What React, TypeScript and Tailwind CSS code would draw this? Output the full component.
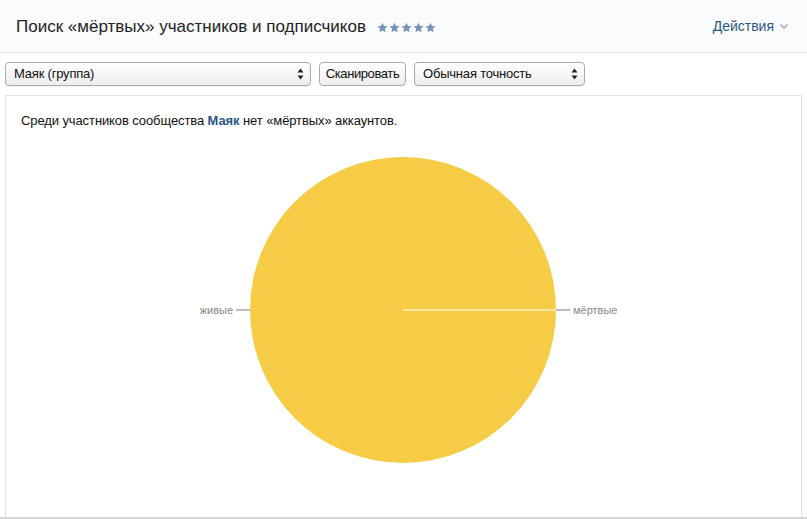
import React from 'react';

/* ── Small drawings ──────────────────────── */
function Stars() {
  return (
    <div className="flex gap-[1px] ml-[11px] mt-[1px]">
      {[0, 1, 2, 3, 4].map((i) => (
        <svg key={i} width="11" height="11" viewBox="0 0 24 24">
          <path d="M12 1.5l3.1 7.2 7.8.7-5.9 5.2 1.8 7.7L12 18.3l-6.8 4 1.8-7.7L1.1 9.4l7.8-.7z" fill="#7693b8" />
        </svg>
      ))}
    </div>
  );
}

function UpDown() {
  return (
    <svg width="7" height="12" viewBox="0 0 7 12">
      <path d="M3.5 0.5 L6.5 4.5 H0.5 Z" fill="#222" />
      <path d="M3.5 11.5 L6.5 7.5 H0.5 Z" fill="#222" />
    </svg>
  );
}

function SelectBox({ label, width }: { label: string; width: string }) {
  return (
    <div
      className={`${width} h-[24px] flex items-center justify-between pl-[8px] pr-[6px] rounded-[4px] border border-[#aaaaaa] bg-gradient-to-b from-white to-[#ededed] shadow-[0_1px_0_rgba(0,0,0,0.04)]`}
    >
      <span className="text-[13px] tracking-[-0.2px] text-[#111]">{label}</span>
      <UpDown />
    </div>
  );
}

function Pie() {
  const cx = 397;
  const cy = 180;
  const r = 153;
  return (
    <svg width="794" height="380" viewBox="0 0 794 380" className="block">
      <circle cx={cx} cy={cy} r={r} fill="#f6cc46" />
      <line x1={cx} y1={cy} x2={cx + r} y2={cy} stroke="#ffffff" strokeWidth="1.2" />
      <line x1={cx - r - 14} y1={cy} x2={cx - r} y2={cy} stroke="#777" strokeWidth="1" />
      <line x1={cx + r} y1={cy} x2={cx + r + 14} y2={cy} stroke="#777" strokeWidth="1" />
      <text x={cx - r - 17} y={cy + 4} textAnchor="end" fontSize="11" fill="#888" fontFamily="Liberation Sans, Arial, sans-serif">
        живые
      </text>
      <text x={cx + r + 17} y={cy + 4} textAnchor="start" fontSize="11" fill="#888" fontFamily="Liberation Sans, Arial, sans-serif">
        мёртвые
      </text>
    </svg>
  );
}

export default function App() {
  return (
    <div className="w-[807px] h-[519px] bg-white overflow-hidden font-['Liberation_Sans',Arial,sans-serif]">
      {/* Header */}
      <div className="h-[53px] bg-[#fafbfc] border-b border-[#e7e8ec] flex items-center justify-between pl-[16px] pr-[19px]">
        <div className="flex items-center pt-[1px]">
          <span className="text-[17px] text-[#222]">Поиск «мёртвых» участников и подписчиков</span>
          <Stars />
        </div>
        <div className="flex items-center gap-[6px] text-[#2a5885] pt-[1px]">
          <span className="text-[14px]">Действия</span>
          <svg width="8" height="5" viewBox="0 0 8 5">
            <path d="M0.5 0.5 L4 4 L7.5 0.5" fill="none" stroke="#8b9bb0" strokeWidth="1.1" />
          </svg>
        </div>
      </div>

      {/* Toolbar */}
      <div className="flex items-center gap-[8px] pl-[5px] pt-[9px] pb-[9px]">
        <SelectBox label="Маяк (группа)" width="w-[306px]" />
        <div className="h-[24px] w-[87px] flex items-center justify-center rounded-[4px] border border-[#aaaaaa] bg-gradient-to-b from-white to-[#ededed] text-[13px] tracking-[-0.4px] text-[#111]">
          Сканировать
        </div>
        <SelectBox label="Обычная точность" width="w-[171px]" />
      </div>

      {/* Result panel */}
      <div className="mx-[5px] h-[422px] border border-[#dfe2e6] border-b-0">
        <p className="pl-[15px] pt-[17px] text-[13px] tracking-[-0.1px] text-[#111] leading-[16px]">
          Среди участников сообщества <span className="font-bold text-[#2a5885]">Маяк</span> нет «мёртвых» аккаунтов.
        </p>
        <div className="pt-[1px]">
          <Pie />
        </div>
      </div>
      <div className="h-[2px] bg-[#d4d4d4]" />
    </div>
  );
}
